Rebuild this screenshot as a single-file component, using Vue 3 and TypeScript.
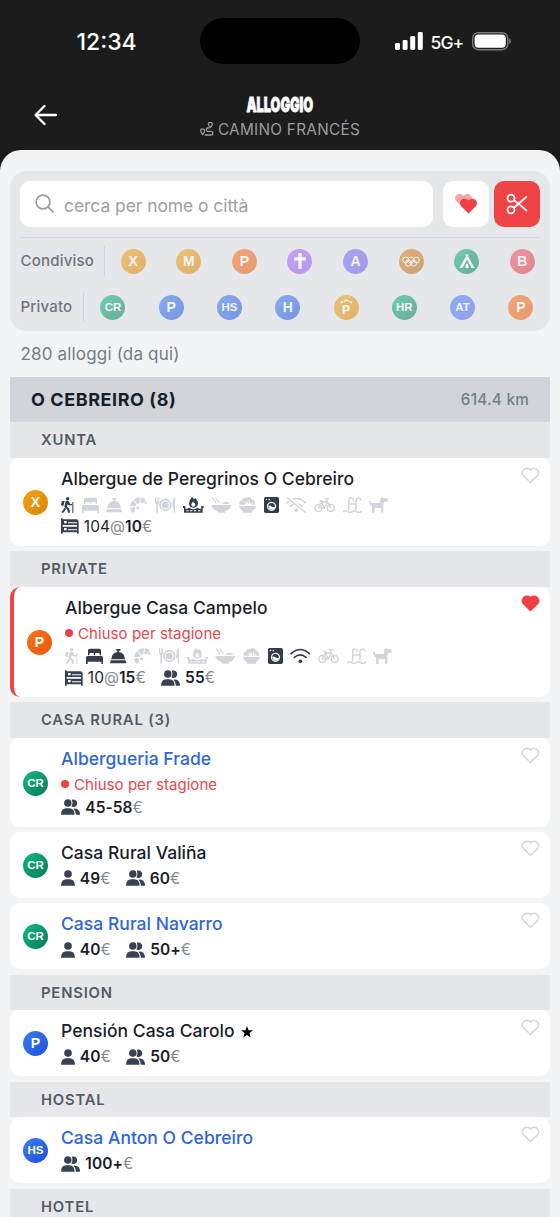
<script setup lang="ts">
interface Badge { label?: string; tone: string; glyph?: string }
interface Price { icon: 'bunk' | 'one' | 'two'; beds?: string; value: string }
interface Lodging {
  name: string
  badge: Badge
  link?: boolean
  star?: boolean
  favourite?: boolean
  closed?: boolean
  services?: string[]
  prices: Price[]
}
interface Group { title: string; items: Lodging[] }

const shared: Badge[] = [
  { label: 'X', tone: 'amber' },
  { label: 'M', tone: 'amber' },
  { label: 'P', tone: 'orange' },
  { glyph: 'cross', tone: 'purple' },
  { label: 'A', tone: 'indigo' },
  { glyph: 'rings', tone: 'brown' },
  { glyph: 'tent', tone: 'green' },
  { label: 'B', tone: 'red' },
]
const priv: Badge[] = [
  { label: 'CR', tone: 'green' },
  { label: 'P', tone: 'blue' },
  { label: 'HS', tone: 'blue' },
  { label: 'H', tone: 'blue' },
  { glyph: 'parador', label: 'P', tone: 'amber' },
  { label: 'HR', tone: 'green' },
  { label: 'AT', tone: 'azure' },
  { label: 'P', tone: 'orange' },
]
const filters = [
  { name: 'Condiviso', badges: shared },
  { name: 'Privato', badges: priv },
]

const widths: Record<string, number> = {
  hiker: 13, bed: 17, bell: 16.5, croissant: 17, plate: 20.5, grill: 21, bowl: 20.5,
  salad: 17, washer: 15, wifi: 20.5, bike: 21, pool: 19, dog: 19,
}
const services = Object.keys(widths)

const groups: Group[] = [
  {
    title: 'XUNTA',
    items: [{
      name: 'Albergue de Peregrinos O Cebreiro',
      badge: { label: 'X', tone: 'amber' },
      services: ['hiker', 'grill', 'washer'],
      prices: [{ icon: 'bunk', beds: '104', value: '10' }],
    }],
  },
  {
    title: 'PRIVATE',
    items: [{
      name: 'Albergue Casa Campelo',
      badge: { label: 'P', tone: 'orange' },
      favourite: true,
      closed: true,
      services: ['bed', 'bell', 'washer', 'wifi'],
      prices: [{ icon: 'bunk', beds: '10', value: '15' }, { icon: 'two', value: '55' }],
    }],
  },
  {
    title: 'CASA RURAL (3)',
    items: [
      { name: 'Albergueria Frade', badge: { label: 'CR', tone: 'green' }, link: true, closed: true, prices: [{ icon: 'two', value: '45-58' }] },
      { name: 'Casa Rural Valiña', badge: { label: 'CR', tone: 'green' }, prices: [{ icon: 'one', value: '49' }, { icon: 'two', value: '60' }] },
      { name: 'Casa Rural Navarro', badge: { label: 'CR', tone: 'green' }, link: true, prices: [{ icon: 'one', value: '40' }, { icon: 'two', value: '50+' }] },
    ],
  },
  {
    title: 'PENSION',
    items: [{ name: 'Pensión Casa Carolo', badge: { label: 'P', tone: 'blue' }, star: true, prices: [{ icon: 'one', value: '40' }, { icon: 'two', value: '50' }] }],
  },
  {
    title: 'HOSTAL',
    items: [{ name: 'Casa Anton O Cebreiro', badge: { label: 'HS', tone: 'blue' }, link: true, prices: [{ icon: 'two', value: '100+' }] }],
  },
  { title: 'HOTEL', items: [] },
]
</script>

<template>
  <div class="screen">
    <div class="status">
      <span class="time">12:34</span>
      <span class="island"></span>
      <div class="signals">
        <svg class="bars" width="29" height="18" viewBox="0 0 29 18" fill="#fff">
          <rect x="0" y="11" width="5" height="7" rx="1.4" /><rect x="7.6" y="8" width="5" height="10" rx="1.4" />
          <rect x="15.2" y="4" width="5" height="14" rx="1.4" /><rect x="22.8" y="0" width="5" height="18" rx="1.4" />
        </svg>
        <span class="net">5G+</span>
        <svg class="battery" width="40" height="19" viewBox="0 0 40 19">
          <rect x=".7" y=".7" width="35" height="17" rx="5.4" fill="none" stroke="#7b7b7b" stroke-width="1.4" />
          <rect x="2.6" y="2.6" width="31.2" height="13.2" rx="3.8" fill="#fff" />
          <path d="M37.2 6.2c2.3.6 2.3 5.2 0 5.8z" fill="#7b7b7b" />
        </svg>
      </div>
    </div>

    <header class="nav">
      <svg class="back" width="24" height="22" viewBox="0 0 24 22" fill="none" stroke="#fff" stroke-width="2.3" stroke-linecap="round" stroke-linejoin="round">
        <path d="M22 11H2M10.5 2L1.6 11l8.9 9" />
      </svg>
      <div class="heading">
        <h1><span>ALLOGGIO</span></h1>
        <p>
          <svg width="14" height="14" viewBox="0 0 42 42" fill="none" stroke="currentColor" stroke-width="4" stroke-linejoin="round">
            <path d="M8 38C4 33 2 30 2 26.500a6 6 0 0 1 12 0C14 30 12 33 8 38zM31 17c-4-5-6-7-6-10a6 6 0 0 1 12 0c0 3-2 5-6 10z" />
            <path d="M14 39h19a5.500 5.500 0 0 0 0-11H24a5 5 0 0 1 0-10h4" />
          </svg>
          <span>CAMINO FRANCÉS</span>
        </p>
      </div>
    </header>

    <main class="sheet">
      <section class="panel">
        <div class="search-row">
          <div class="search">
            <svg width="20" height="20" viewBox="0 0 20 20" fill="none" stroke="#9a9da3" stroke-width="1.7" stroke-linecap="round">
              <circle cx="8" cy="8" r="6.9" /><path d="M13.200 13.200l5 5" />
            </svg>
            <span>cerca per nome o città</span>
          </div>
          <div class="tool">
            <svg width="24" height="22" viewBox="0 0 24 22">
              <path d="M9.500 15L2.200 8.200C-1.500 4.200 4.500-2 9.500 2.800 14.500-2 20.500 4.200 16.800 8.200z" fill="#f7a3a5" />
              <path d="M14.500 20.500L7.200 13.200C3.300 9 9.600 2.800 14.500 7.500 19.400 2.800 25.700 9 21.800 13.200z" fill="#ef4044" />
            </svg>
          </div>
          <div class="tool cut">
            <svg width="24" height="24" viewBox="0 0 24 24" fill="none" stroke="#fff" stroke-width="1.8" stroke-linecap="round">
              <circle cx="6" cy="6.200" r="3.500" /><circle cx="6" cy="17.800" r="3.500" />
              <path d="M9 8.200l5 4M9 15.800L21.300 5M15.500 13.300l5.800 5.200" />
            </svg>
          </div>
        </div>
        <div v-for="f in filters" :key="f.name" class="filter">
          <span class="filter-name">{{ f.name }}</span>
          <div class="filter-badges">
            <span v-for="(b, i) in f.badges" :key="i" class="badge" :class="[b.tone, { two: b.label && b.label.length > 1 }]">
              <svg v-if="b.glyph === 'cross'" width="12" height="16" viewBox="0 0 12 16" fill="#fff"><path d="M4.300 0h3.400v4.200H12v3.200H7.700V16H4.300V7.400H0V4.200h4.300z" /></svg>
              <svg v-else-if="b.glyph === 'rings'" width="18" height="11" viewBox="0 0 18 11" fill="none" stroke="#fff" stroke-width="1">
                <circle cx="3.600" cy="4" r="2.900" /><circle cx="9" cy="4" r="2.900" /><circle cx="14.400" cy="4" r="2.900" /><circle cx="6.300" cy="7.200" r="2.900" /><circle cx="11.700" cy="7.200" r="2.900" />
              </svg>
              <svg v-else-if="b.glyph === 'tent'" width="16" height="15" viewBox="0 0 16 15" fill="#fff"><path d="M7 0l1 1.400L9 0l.9.600L9 2.300 15.600 14h-3L8 5.400 3.400 14h-3L7 2.300 6.100.600zM8 9.300c1.200.6 1.600 2.400 1.600 4.700H6.400c0-2.300.4-4.100 1.600-4.700z" /></svg>
              <span v-else-if="b.glyph === 'parador'" class="parador">
                <svg width="13" height="5" viewBox="0 0 13 5" fill="none" stroke="#fff" stroke-width="1.500"><path d="M.8 4.200L3 2.400M4.300 2.500L6.500.9l2.200 1.600M10 2.400l2.200 1.800" /></svg>
                <span>P</span>
              </span>
              <template v-else>{{ b.label }}</template>
            </span>
          </div>
        </div>
      </section>

      <p class="count">280 alloggi (da qui)</p>

      <div class="town"><h2>O CEBREIRO (8)</h2><span>614.4 km</span></div>

      <section v-for="g in groups" :key="g.title" class="group">
        <h3>{{ g.title }}</h3>
        <article v-for="l in g.items" :key="l.name" class="card" :class="{ fav: l.favourite }">
          <span class="badge" :class="[l.badge.tone, { two: l.badge.label && l.badge.label.length > 1 }]">{{ l.badge.label }}</span>
          <div class="body">
            <h4 :class="{ link: l.link }">{{ l.name }}<svg v-if="l.star" class="star" width="12" height="12" viewBox="0 0 12 12"><path d="M6 0l1.500 4.300H12L8.400 7l1.300 4.600L6 8.900l-3.700 2.700L3.600 7 0 4.300h4.500z" /></svg></h4>
            <div v-if="l.closed" class="closed"><i></i><span>Chiuso per stagione</span></div>
            <div v-if="l.services" class="services">
              <svg v-for="s in services" :key="s" :width="widths[s]" height="16" :viewBox="`0 0 ${widths[s] * 3} 48`" :class="{ on: l.services.includes(s) }" fill="currentColor">
                <g v-if="s === 'hiker'">
                  <circle cx="20" cy="5" r="5" />
                  <path d="M2 15q1-4 5-3l4 1-4 14-7-2zM14 12q8-3 11 3l2 6h6v4H23l-3-4-2 8 7 6 2 12h-6l-2-9-9-8zM10 32l5 4-3 5-6 7-5-2 6-8zM34 15h3v33h-3z" />
                </g>
                <path v-else-if="s === 'bed'" d="M6 22V7q0-5 5-5h29q5 0 5 5v15h-4v-3q0-4-4-4h-6q-4 0-4 4v3h-3v-3q0-4-4-4h-6q-4 0-4 4v3zM0 29q0-5 5-5h41q5 0 5 5v19h-5v-7H5v7H0z" />
                <path v-else-if="s === 'bell'" d="M19 3h12v5h-4v4q17 3 18 22H4Q5 15 22 12V8h-3zM3 37h43l3 7q0 2-2 2H2q-2 0-2-2z" />
                <path v-else-if="s === 'croissant'" d="M14 45l-7 2Q0 39 0 32l14-2 1 7zM0 28Q1 17 9 10l11 13-4 4zM11 8Q19 1 30 1l-2 16-6 4zM33 1q9 1 14 7l-8 11-8-2zM48 11q4 5 0 10l-6-2zM17 32l5-5 6 5-3 6z" />
                <g v-else-if="s === 'plate'">
                  <circle cx="31" cy="24" r="10.500" /><circle cx="31" cy="24" r="16" fill="none" stroke="currentColor" stroke-width="5" />
                  <path d="M0 1h3v13h2V1h3v13h2V1h3v14q0 5-4 6v26H4V21q-4-1-4-6zM59 1h2v46h-5V31h-4Q51 6 59 1z" />
                </g>
                <path v-else-if="s === 'grill'" fill-rule="evenodd" d="M27 0q4 3 6 7l4-4q9 10 8 18-2 11-14 11-12 0-13-12Q19 8 27 0zM31 13q-7 7-6 11 1 5 6 5 6 0 6-5 0-4-3-7l-2 2zM0 27h7v8h6l5-3 10 5h6l10-5 5 3h6v-8h7v6h-3v14H3V33H0zM10 40v3h7v-3zM21 40v3h7v-3zM33 40v3h7v-3zM45 40v3h7v-3z" />
                <g v-else-if="s === 'bowl'">
                  <path d="M1 24h59q-2 14-18 19v4H20v-4Q4 38 1 24zM31 21q4-6 10-5 3-4 7-1 5-1 7 6z" />
                  <path d="M5 1q-1 5 4 8t5 10M15 1q-1 5 4 8t5 10" fill="none" stroke="currentColor" stroke-width="3.500" />
                </g>
                <g v-else-if="s === 'salad'">
                  <path d="M0 27h51q-2 11-12 15v5H12v-5Q2 38 0 27zM2 23Q-2 12 9 10 12 0 22 3q9-7 16 4 12 3 10 16H36l6-9-9 7V8l-5 13-5-13v12l-9-8 6 11z" />
                </g>
                <g v-else-if="s === 'washer'">
                  <rect width="45" height="48" rx="5" /><circle cx="7.500" cy="7.500" r="2.500" fill="#fff" /><circle cx="16" cy="7.500" r="2.500" fill="#fff" />
                  <circle cx="22.500" cy="28" r="12" fill="none" stroke="#fff" stroke-width="3.500" />
                  <path d="M13 26q5-2 9 2t11 1q-1 8-10 9-9-1-10-12z" fill="#fff" />
                </g>
                <g v-else-if="s === 'wifi'" fill="none" stroke="currentColor" stroke-width="5" stroke-linecap="round">
                  <circle cx="31" cy="40" r="5.500" fill="currentColor" stroke="none" />
                  <path d="M3 17q28-25 55 0M13 28q18-15 35 0" />
                  <path v-if="!l.services.includes(s)" d="M3 0l55 47" stroke="#fff" stroke-width="10" /><path v-if="!l.services.includes(s)" d="M3 2l55 44" stroke-width="4" />
                </g>
                <g v-else-if="s === 'bike'" fill="none" stroke="currentColor" stroke-width="4.500">
                  <circle cx="13" cy="33" r="10.500" /><circle cx="50" cy="33" r="10.500" /><path d="M13 33l9-18h18l10 18M22 15l9 18h-18M31 33l9-18-4-10h8M16 11h10" />
                </g>
                <g v-else-if="s === 'pool'" fill="none" stroke="currentColor" stroke-width="4.500" stroke-linecap="round">
                  <path d="M17 37V11q0-8 8-8 5 0 6 6M39 37V11q0-8 8-8 6 0 7 6M17 21h22M2 44q6-5 13 0 6 5 13 0 6-5 13 0 7 5 14-1" />
                </g>
                <path v-else d="M0 11l4 0 3 7h25l2-14 6-4 4 4h9q4 0 4 5t-6 6h-6l-2 9v23h-7V33H17v14h-8V28q-5-2-7-8z" />
              </svg>
            </div>
            <div class="prices">
              <span v-for="p in l.prices" :key="p.icon" class="price">
                <svg v-if="p.icon === 'bunk'" width="18" height="16" viewBox="0 0 54 48"><path fill-rule="evenodd" d="M0 1h5v3h41q7 0 7 7v36h-5v-4H5v4H0zM5 21v5h43v-5zM9 9v7h8V9zM21 13v3h27v-3zM9 30v7h8v-7zM21 34v3h27v-3z" /></svg>
                <svg v-else-if="p.icon === 'one'" width="14" height="16" viewBox="0 0 42 48"><circle cx="21" cy="12" r="11.500" /><path d="M0 47q1-19 16-19h10q15 0 16 19z" /></svg>
                <svg v-else width="19.500" height="16" viewBox="0 0 60 48" preserveAspectRatio="none"><circle cx="21" cy="12" r="11.500" /><path d="M0 47q1-19 16-19h10q15 0 16 19zM32 22q6-9 1-20 15-3 17 10-1 12-12 12-4 0-6-2zM38 29q19-3 21 18H46q0-12-8-18z" /></svg>
                <span><template v-if="p.beds">{{ p.beds }}<em>@</em></template><b>{{ p.value }}</b><em>€</em></span>
              </span>
            </div>
          </div>
          <svg class="heart" width="19" height="17" viewBox="0 0 20 18"><path d="M10 16.300L2.600 9.200C-.8 5.300 3.400.2 7.800 1.600 8.700 2 9.500 2.600 10 3.300c.5-.7 1.300-1.300 2.200-1.700C16.600.2 20.800 5.300 17.400 9.200z" /></svg>
        </article>
      </section>
    </main>
  </div>
</template>

<style>
html, body { margin: 0; background: #1c1c1c; }
</style>

<style scoped>
.screen { width: 560px; height: 1217px; overflow: hidden; background: #1c1c1c; font-family: Inter, "Liberation Sans", sans-serif; color: #1a1e2a; }
h1, h2, h3, h4, p { margin: 0; font-weight: inherit; }
svg { display: block; flex: none; }
.status { display: grid; grid-template-columns: 200px 160px 200px; align-items: center; height: 82px; color: #fff; }
.time { padding: 1px 0 0 76.500px; font-size: 23px; font-weight: 500; }
.island { height: 46px; border-radius: 23px; background: #000; }
.signals { display: flex; align-items: center; padding-left: 35px; }
.net { margin-left: 6.500px; width: 41.500px; font-size: 17.500px; font-weight: 500; letter-spacing: -.9px; padding-top: 2px; }
.nav { display: grid; grid-template-columns: 60px 1fr 60px; height: 68px; color: #fff; }
.back { margin: 22px 0 0 34px; }
.heading { display: flex; flex-direction: column; align-items: center; }
.heading h1 { width: 68px; display: flex; justify-content: center; margin-top: 10px; height: 25px; font-size: 20.500px; line-height: 26px; font-weight: 900; }
.heading h1 span { transform: scaleX(.62); -webkit-text-stroke: .8px #fff; }
.heading p { display: flex; align-items: center; gap: 4px; height: 24px; color: #9b9b9f; font-size: 15.300px; letter-spacing: .3px; }
.sheet { height: 1067px; box-sizing: border-box; padding: 21px 10px 0; border-radius: 21px 21px 0 0; background: #f3f4f6; overflow: hidden; }
.panel { box-sizing: border-box; height: 160px; padding: 10px 0 0 10px; border-radius: 16px; background: #e5e7eb; }
.search-row { display: flex; margin-right: 10px; height: 56px; border-bottom: 1px solid #d1d5db; }
.search { display: flex; align-items: center; flex: 1; height: 46px; border-radius: 10px; background: #fff; }
.search svg { margin: 0 9px 0 15px; }
.search span { padding-top: 3px; font-size: 17.500px; color: #9ca0a6; letter-spacing: -.07px; }
.tool { display: grid; place-items: center; width: 46px; height: 46px; margin-left: 10px; border-radius: 10px; background: #fff; }
.cut { margin-left: 5px; background: #ef4245; }
.filter { display: flex; align-items: center; height: 46px; }
.filter-name { padding: 0 10.500px 0 .5px; height: 30px; line-height: 30px; border-right: 1px solid #d1d5db; color: #6f747d; font-size: 15px; font-weight: 500; letter-spacing: .2px; }
.filter-badges { flex: 1; display: flex; justify-content: space-around; }
.filter-badges .badge { opacity: .55; }
.badge { flex: none; display: flex; align-items: center; justify-content: center; width: 25px; height: 25px; border-radius: 50%; color: #fff; font: 700 14px/25px "Liberation Sans", sans-serif; }
.badge.two { font-size: 11.500px; }
.parador { display: flex; flex-direction: column; align-items: center; }
.parador span { height: 11px; line-height: 12px; font-size: 12px; }
.amber { background: linear-gradient(135deg, #f2a313, #dc8406); }
.orange { background: linear-gradient(135deg, #f97316, #ea580c); }
.purple { background: linear-gradient(135deg, #a46cf5, #9950f0); }
.indigo { background: linear-gradient(135deg, #7c6cf5, #6a5ceb); }
.brown { background: linear-gradient(135deg, #dd8420, #b96512); }
.green { background: linear-gradient(135deg, #10b981, #067b59); }
.red { background: linear-gradient(135deg, #ef5560, #dd3745); }
.blue { background: linear-gradient(135deg, #3b7df2, #1f50d9); }
.azure { background: linear-gradient(135deg, #3b82f6, #5862ee); }
.count { height: 46px; padding-left: 10.500px; line-height: 47px; color: #777c85; font-size: 17px; letter-spacing: .17px; }
.town { display: flex; align-items: center; justify-content: space-between; height: 45.300px; padding: 0 21px; background: #d1d5da; }
.town h2 { font-size: 18px; font-weight: 700; letter-spacing: .57px; }
.town span { color: #777d87; font-size: 15.300px; font-weight: 500; letter-spacing: .22px; }
.group h3 { height: 35.700px; line-height: 37px; padding-left: 31px; background: #e5e7eb; color: #565b63; font-size: 14.800px; font-weight: 600; letter-spacing: .82px; }
.town + .group h3 { height: 36.200px; }
.group + .group { margin-top: 5.300px; }
.card { display: flex; align-items: center; padding: 8.500px 10px 9px 13px; border-radius: 10px; background: #fff; }
.card > .badge { margin-top: 2px; }
.card + .card { margin-top: 5.300px; }
.card.fav { border-left: 4px solid #ef4245; }
.body { flex: 1; margin-left: 13px; }
.body h4 { display: flex; align-items: center; height: 24px; margin-bottom: 2.500px; font-size: 17.500px; font-weight: 500; letter-spacing: .03px; white-space: nowrap; }
.body h4.link { color: #2f66d8; }
.star { margin: 3px 0 0 6px; }
.closed { display: flex; align-items: center; height: 22.600px; color: #e5484d; font-size: 15px; letter-spacing: .06px; }
.closed i { width: 8px; height: 8px; margin-right: 5px; border-radius: 50%; background: #ef4044; }
.services { display: flex; align-items: center; gap: 7.500px; height: 20.500px; padding-top: 1px; color: #d1d5db; }
.services .on { color: #343b4b; }
.prices { display: flex; align-items: center; gap: 15px; height: 21px; padding-top: 1px; font-size: 15.500px; letter-spacing: .05px; }
.price { display: flex; align-items: center; gap: 4.800px; }
.price svg { fill: #374151; }
.price b { font-weight: 600; }
.price em { font-style: normal; color: #858991; }
.heart { align-self: flex-start; }
.heart path { fill: none; stroke: #d4d6da; stroke-width: 1.600; stroke-linejoin: round; }
.fav .heart path { fill: #ef4044; stroke: #ef4044; }
</style>
